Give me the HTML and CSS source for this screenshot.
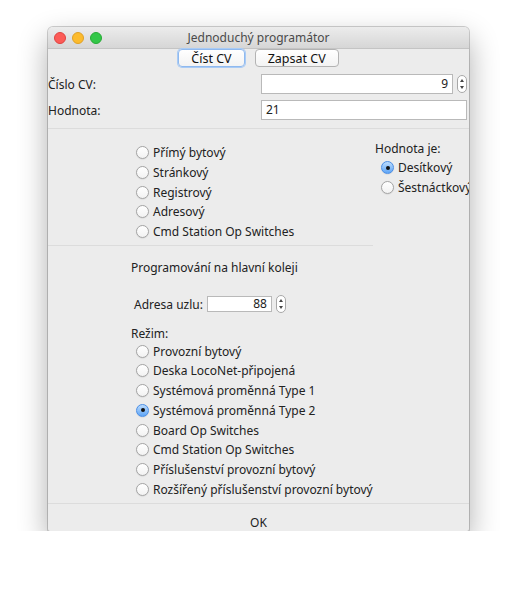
FILE: index.html
```html
<!DOCTYPE html>
<html lang="cs">
  <head>
    <meta charset="UTF-8" />
    <meta name="viewport" content="width=device-width, initial-scale=1.0" />
    <title>Jednoduchý programátor</title>
    <link rel="stylesheet" href="styles.css">
  </head>
  <body>
    <div class="window">
      <div class="titlebar">
        <div class="lights">
          <span class="light red"></span>
          <span class="light yellow"></span>
          <span class="light green"></span>
        </div>
        <div class="title">Jednoduchý programátor</div>
      </div>

      <div class="toolbar">
        <button class="btn focused">Číst CV</button>
        <button class="btn">Zapsat CV</button>
      </div>

      <div class="fields">
        <label class="field-label">Číslo CV:</label>
        <div class="spin">
          <div class="input right cv">9</div>
          <span class="stepper"></span>
        </div>
        <label class="field-label">Hodnota:</label>
        <div class="input value">21</div>
      </div>

      <div class="body">
        <div class="left">
          <div class="modes">
            <div class="radio"><span class="dot"></span>Přímý bytový</div>
            <div class="radio"><span class="dot"></span>Stránkový</div>
            <div class="radio"><span class="dot"></span>Registrový</div>
            <div class="radio"><span class="dot"></span>Adresový</div>
            <div class="radio"><span class="dot"></span>Cmd Station Op Switches</div>
          </div>

          <div class="ops">
            <div class="ops-title">Programování na hlavní koleji</div>
            <div class="address">
              <span>Adresa uzlu:</span>
              <div class="input right addr">88</div>
              <span class="stepper"></span>
            </div>
            <div class="ops-title mode-label">Režim:</div>
            <div class="modes">
              <div class="radio"><span class="dot"></span>Provozní bytový</div>
              <div class="radio"><span class="dot"></span>Deska LocoNet-připojená</div>
              <div class="radio"><span class="dot"></span>Systémová proměnná Type 1</div>
              <div class="radio"><span class="dot on"></span>Systémová proměnná Type 2</div>
              <div class="radio"><span class="dot"></span>Board Op Switches</div>
              <div class="radio"><span class="dot"></span>Cmd Station Op Switches</div>
              <div class="radio"><span class="dot"></span>Příslušenství provozní bytový</div>
              <div class="radio"><span class="dot"></span>Rozšířený příslušenství provozní bytový</div>
            </div>
          </div>
        </div>

        <div class="right-col">
          <div class="kind-label">Hodnota je:</div>
          <div class="radio"><span class="dot on"></span>Desítkový</div>
          <div class="radio"><span class="dot"></span>Šestnáctkový</div>
        </div>
      </div>

      <div class="footer">OK</div>
    </div>
  </body>
</html>
```

FILE: styles.css
```css
*,
*::before,
*::after {
  box-sizing: border-box;
}

body {
  margin: 0;
  background: #fff;
  font-family: "Noto Sans", "DejaVu Sans", sans-serif;
  font-size: 12px;
  color: #222;
}

/* Mac style dialog window */
.window {
  width: 421px;
  height: 504px;
  margin: 27px 0 0 48px;
  background: #ececec;
  border-radius: 5px 5px 2px 2px;
  box-shadow: 0 0 0 1px rgba(0, 0, 0, 0.18), 0 12px 30px rgba(0, 0, 0, 0.33);
  overflow: hidden;
  display: flex;
  flex-direction: column;
}

.titlebar {
  height: 22px;
  flex: none;
  display: flex;
  align-items: center;
  background: linear-gradient(#ececec, #d6d6d6);
  border-bottom: 1px solid #c4c4c4;
}

.lights {
  display: flex;
  gap: 6px;
  padding-left: 6px;
  width: 120px;
}

.light {
  width: 12px;
  height: 12px;
  border-radius: 50%;
}

.red {
  background: #fc5b57;
  border: 1px solid #de4340;
}

.yellow {
  background: #fcbb2d;
  border: 1px solid #dea026;
}

.green {
  background: #33c748;
  border: 1px solid #27aa35;
}

.title {
  flex: 1;
  padding-right: 120px;
  text-align: center;
  font-size: 12px;
  color: #4a4a4a;
}

.toolbar {
  display: flex;
  justify-content: center;
  gap: 10px;
  height: 18px;
  flex: none;
}

.btn {
  font: inherit;
  font-size: 12.5px;
  color: #111;
  height: 18px;
  padding: 0 12px;
  line-height: 15px;
  background: linear-gradient(#fff, #f3f3f3);
  border: 1px solid #b3b3b3;
  border-radius: 4px;
}

.btn.focused {
  border-color: #8fb9ef;
  box-shadow: 0 0 0 1px #a9cbf5;
}

.fields {
  display: grid;
  grid-template-columns: 213px 1fr;
  grid-auto-rows: 20px;
  row-gap: 6px;
  align-items: center;
  margin-top: 7px;
  padding-right: 3px;
  height: 55px;
  flex: none;
  border-bottom: 1px solid #dcdcdc;
}

.spin {
  display: flex;
  align-items: center;
  gap: 4px;
}

.input {
  height: 20px;
  background: #fff;
  border: 1px solid #b9b9b9;
  padding: 0 4px;
  line-height: 18px;
}

.input.right {
  text-align: right;
}

.cv {
  width: 192px;
}

.stepper {
  width: 10px;
  height: 18px;
  border: 1px solid #a8a8a8;
  border-radius: 5px;
  background: #fff;
  position: relative;
}

.stepper::before,
.stepper::after {
  content: "";
  position: absolute;
  left: 2px;
  border-left: 2px solid transparent;
  border-right: 2px solid transparent;
}

.stepper::before {
  top: 3px;
  border-bottom: 3px solid #444;
}

.stepper::after {
  bottom: 3px;
  border-top: 3px solid #444;
}

.body {
  flex: 1;
  min-height: 0;
  display: flex;
}

.left {
  width: 325px;
  flex: none;
}

.modes {
  padding-left: 88px;
}

.left > .modes {
  padding-top: 14px;
  padding-bottom: 4px;
  border-bottom: 1px solid #dcdcdc;
}

.radio {
  display: flex;
  align-items: center;
  gap: 4px;
  height: 19.7px;
  white-space: nowrap;
}

.dot {
  width: 13px;
  height: 13px;
  flex: none;
  border-radius: 50%;
  border: 1px solid #a4a4a4;
  background: linear-gradient(#fff, #f2f2f2);
  box-shadow: 0 0.5px 1px rgba(0, 0, 0, 0.12);
  position: relative;
}

.dot.on {
  border-color: #4a8ee6;
  background: linear-gradient(#bcdcfd, #5fa5f6);
}

.dot.on::after {
  content: "";
  position: absolute;
  left: 3.5px;
  top: 3.5px;
  width: 4px;
  height: 4px;
  border-radius: 50%;
  background: #111;
}

.ops {
  padding-left: 83px;
  padding-top: 14px;
}

.ops .modes {
  padding-left: 5px;
}

.ops-title {
  line-height: 15px;
}

.address {
  display: flex;
  align-items: center;
  gap: 4px;
  margin: 21px 0 0 3px;
  height: 16px;
}

.addr {
  width: 65px;
  height: 16px;
  line-height: 14px;
}

.mode-label {
  margin-top: 14px;
  margin-bottom: 0;
}

.right-col {
  flex: 1;
  overflow: hidden;
  padding-top: 12px;
  padding-left: 2px;
}

.right-col .radio {
  padding-left: 6px;
}

.kind-label {
  line-height: 15px;
  margin-bottom: 2px;
}

.footer {
  height: 28px;
  flex: none;
  border-top: 1px solid #dcdcdc;
  text-align: center;
  padding-top: 11px;
  line-height: 15px;
}
```
